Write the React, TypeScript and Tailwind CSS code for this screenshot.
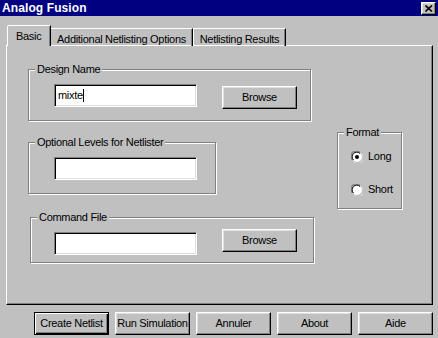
import React from "react";

const raised =
  "border border-t-white border-l-white border-r-black border-b-black shadow-[inset_-1px_-1px_0_#808080,inset_1px_1px_0_#dfdfdf]";
const sunken =
  "border border-t-[#808080] border-l-[#808080] border-r-white border-b-white shadow-[inset_1px_1px_0_#000,inset_-1px_-1px_0_#dfdfdf] bg-white";

const Btn = ({ label, isDefault }: { label: string; isDefault?: boolean }) => (
  <button
    className={
      "w-[75px] h-[23px] flex items-center justify-center bg-[#c0c0c0] text-black " +
      (isDefault
        ? "border border-black shadow-[inset_1px_1px_0_#fff,inset_-1px_-1px_0_#000,inset_-2px_-2px_0_#808080]"
        : raised)
    }
  >
    {label}
  </button>
);

const Group = ({
  title,
  className,
  children,
}: {
  title: string;
  className: string;
  children?: React.ReactNode;
}) => (
  <div
    className={
      "relative border border-[#808080] shadow-[1px_1px_0_#fff,inset_1px_1px_0_#fff] " +
      className
    }
  >
    <span className="absolute -top-[7px] left-[6px] px-[2px] bg-[#c0c0c0] leading-[13px]">
      {title}
    </span>
    {children}
  </div>
);

const Field = ({ value }: { value?: string }) => (
  <div className={"w-[143px] h-[23px] flex items-center pl-[3px] " + sunken}>
    {value && <span>{value}</span>}
    {value && <span className="w-px h-[13px] bg-black" />}
  </div>
);

const Radio = ({ checked, label }: { checked?: boolean; label: string }) => (
  <div className="flex items-center gap-[5px] h-[13px]">
    <svg width="12" height="12" viewBox="0 0 12 12">
      <circle cx="6" cy="6" r="5" fill="#fff" />
      <path d="M1.5 9 A5 5 0 0 1 9 1.5" stroke="#808080" strokeWidth="1.2" fill="none" />
      <path d="M2.5 9 A4 4 0 0 1 9 2.5" stroke="#000" strokeWidth="1" fill="none" />
      <path d="M3 11 A5 5 0 0 0 11 3" stroke="#dfdfdf" strokeWidth="1" fill="none" />
      {checked && <circle cx="6" cy="6" r="2" fill="#000" />}
    </svg>
    <span>{label}</span>
  </div>
);

export default function App() {
  return (
    <div className="w-[438px] h-[338px] bg-[#c0c0c0] text-black text-[11px] leading-[13px] tracking-[-0.3px] font-['Liberation_Sans',Arial,sans-serif] overflow-hidden">
      {/* title bar */}
      <div className="h-[16px] bg-[#000080] flex items-center justify-between pl-[2px] pr-[2px]">
        <span className="text-white font-bold text-[12px] tracking-[0.1px]">Analog Fusion</span>
        <div className={"w-[15px] h-[13px] bg-[#c0c0c0] flex items-center justify-center " + raised}>
          <svg width="8" height="7" viewBox="0 0 8 7">
            <path d="M0.5 0.5 L7 6.5 M7 0.5 L0.5 6.5" stroke="#000" strokeWidth="1.6" />
          </svg>
        </div>
      </div>

      {/* tabs */}
      <div className="flex items-end h-[21px] mt-[9px] pl-[7px] relative z-10">
        <div className="w-[44px] h-[21px] bg-[#c0c0c0] border-t border-l border-white border-r border-r-black shadow-[inset_-1px_0_0_#808080] rounded-tl-[2px] pl-[8px] pt-[4px]">
          Basic
        </div>
        <div className="w-[142px] h-[18px] border-t border-white border-r border-r-black shadow-[inset_-1px_0_0_#808080] text-center pt-[4px]">
          Additional Netlisting Options
        </div>
        <div className="w-[93px] h-[18px] border-t border-l border-white border-r border-r-black shadow-[inset_-1px_0_0_#808080] text-center pt-[4px]">
          Netlisting Results
        </div>
      </div>

      {/* panel */}
      <div className="ml-[6px] -mt-px w-[427px] h-[260px] border border-t-white border-l-white border-r-black border-b-black shadow-[inset_-1px_-1px_0_#808080] flex pl-[21px] pt-[23px]">
        <div className="w-[286px] flex flex-col">
          <Group title="Design Name" className="w-[283px] h-[52px] flex items-start pt-[14px] pl-[25px]">
            <Field value="mixte" />
            <div className="ml-[25px] mt-[2px]">
              <Btn label="Browse" />
            </div>
          </Group>
          <Group title="Optional Levels for Netlister" className="mt-[21px] w-[188px] h-[52px] pt-[14px] pl-[25px]">
            <Field />
          </Group>
          <Group title="Command File" className="mt-[23px] ml-[2px] w-[284px] h-[46px] flex items-start pt-[13px] pl-[23px]">
            <div className="mt-[1px]">
              <Field />
            </div>
            <div className="ml-[25px] -mt-[2px]">
              <Btn label="Browse" />
            </div>
          </Group>
        </div>
        <Group title="Format" className="ml-[23px] mt-[63px] w-[65px] h-[77px] flex flex-col gap-[20px] pt-[17px] pl-[13px]">
          <Radio checked label="Long" />
          <Radio label="Short" />
        </Group>
      </div>

      {/* buttons */}
      <div className="flex gap-[6px] pl-[34px] mt-[7px]">
        <Btn label="Create Netlist" isDefault />
        <Btn label="Run Simulation" />
        <Btn label="Annuler" />
        <Btn label="About" />
        <Btn label="Aide" />
      </div>
    </div>
  );
}
